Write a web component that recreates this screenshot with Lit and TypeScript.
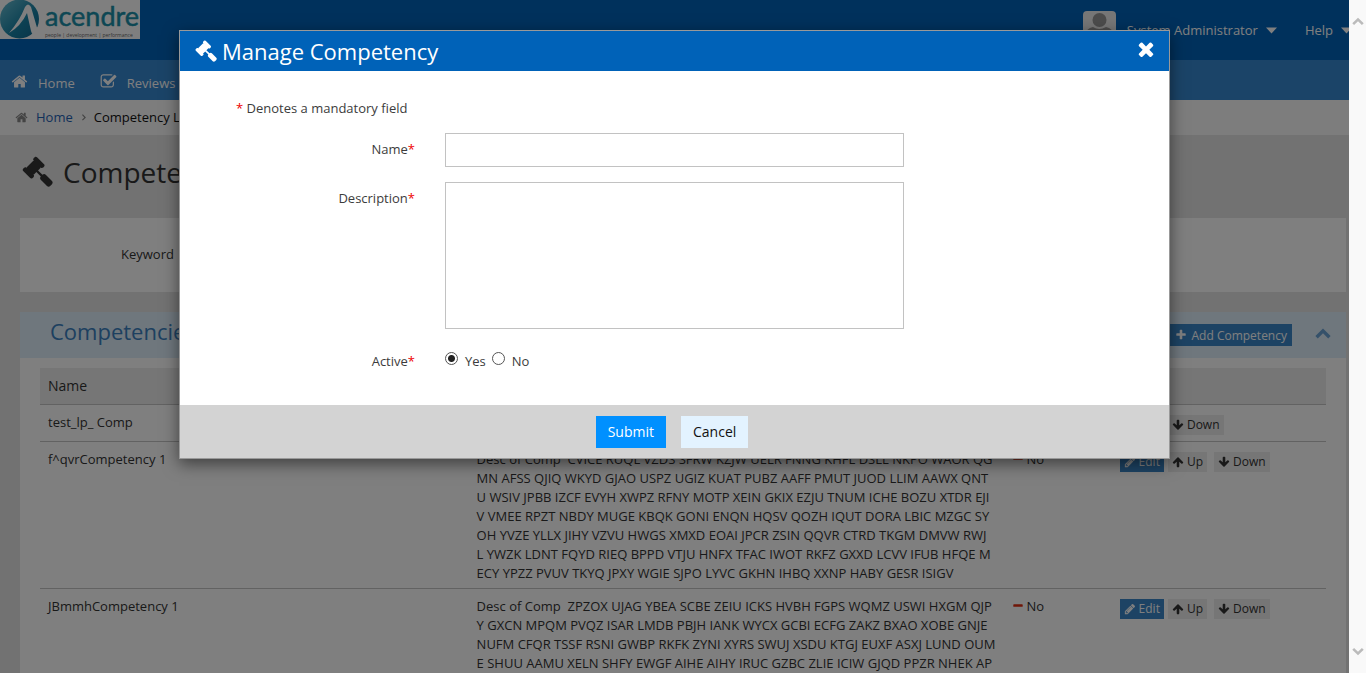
import { LitElement, html, css, svg } from "lit";
import { customElement, property, state } from "lit/decorators.js";

const ICONS: Record<string, string> = {
  home: "M1472 992v480q0 26-19 45t-45 19h-384v-384h-256v384h-384q-26 0-45-19t-19-45v-480q0-1 .5-3t.5-3l575-474 575 474q1 2 1 6zm223-69l-62 74q-8 9-21 11h-3q-13 0-21-7l-692-577-692 577q-12 8-24 7-13-2-21-11l-62-74q-8-10-7-23.5t11-21.5l719-599q32-26 76-26t76 26l244 204v-195q0-14 9-23t23-9h192q14 0 23 9t9 23v408l219 182q10 8 11 21.5t-7 23.5z",
  check: "M1472 930v318q0 119-84.5 203.5t-203.5 84.5h-832q-119 0-203.5-84.5t-84.5-203.5v-832q0-119 84.5-203.5t203.5-84.5h832q63 0 117 25 15 7 18 23 3 17-9 29l-49 49q-10 10-23 10-3 0-9-2-23-6-45-6h-832q-66 0-113 47t-47 113v832q0 66 47 113t113 47h832q66 0 113-47t47-113v-254q0-13 9-22l64-64q10-10 23-10 6 0 12 3 20 8 20 29zm231-489l-814 814q-24 24-57 24t-57-24l-430-430q-24-24-24-57t24-57l110-110q24-24 57-24t57 24l263 263 647-647q24-24 57-24t57 24l110 110q24 24 24 57t-24 57z",
  gavel: "M1771 1536q0 53-37 90l-107 108q-39 37-91 37-53 0-90-37l-363-364q-38-36-38-90 0-53 43-96l-256-256-126 126q-14 14-34 14t-34-14q2 2 12.5 12t12.5 13 10 11.5 10 13.5 6 13.5 5.5 16.5 1.5 18q0 38-28 68-3 3-16.5 18t-19 20.5-18.5 16.5-22 15.5-22 9-26 4.5q-40 0-68-28l-408-408q-28-28-28-68 0-13 4.5-26t9-22 15.5-22 16.5-18.5 20.5-19 18-16.5q30-28 68-28 10 0 18 1.5t16.5 5.5 13.5 6 13.5 10 11.5 10 13 12.5 12 12.5q-14-14-14-34t14-34l348-348q14-14 34-14t34 14q-2-2-12.5-12t-12.5-13-10-11.5-10-13.5-6-13.5-5.5-16.5-1.5-18q0-38 28-68 3-3 16.5-18t19-20.5 18.5-16.5 22-15.5 22-9 26-4.5q40 0 68 28l408 408q28 28 28 68 0 13-4.5 26t-9 22-15.5 22-16.5 18.5-20.5 19-18 16.5q-30 28-68 28-10 0-18-1.5t-16.5-5.5-13.5-6-13.5-10-11.5-10-13-12.5-12-12.5q14 14 14 34t-14 34l-126 126 256 256q43-43 96-43 52 0 91 37l363 363q37 39 37 91z",
  times: "M1490 1322q0 40-28 68l-136 136q-28 28-68 28t-68-28l-294-294-294 294q-28 28-68 28t-68-28l-136-136q-28-28-28-68t28-68l294-294-294-294q-28-28-28-68t28-68l136-136q28-28 68-28t68 28l294 294 294-294q28-28 68-28t68 28l136 136q28 28 28 68t-28 68l-294 294 294 294q28 28 28 68z",
  plus: "M1600 736v192q0 40-28 68t-68 28h-416v416q0 40-28 68t-68 28h-192q-40 0-68-28t-28-68v-416h-416q-40 0-68-28t-28-68v-192q0-40 28-68t68-28h416v-416q0-40 28-68t68-28h192q40 0 68 28t28 68v416h416q40 0 68 28t28 68z",
  minus: "M1600 736v192q0 40-28 68t-68 28h-1216q-40 0-68-28t-28-68v-192q0-40 28-68t68-28h1216q40 0 68 28t28 68z",
  pencil: "M491 1536l91-91-235-235-91 91v107h128v128h107zm523-928q0-22-22-22-10 0-17 7l-542 542q-7 7-7 17 0 22 22 22 10 0 17-7l542-542q7-7 7-17zm-54-192l416 416-832 832h-416v-416zm683 96q0 53-37 90l-166 166-416-416 166-165q36-38 90-38 53 0 91 38l235 234q37 39 37 91z",
  up: "M1675 971q0 51-37 90l-75 75q-38 38-91 38-54 0-90-38l-294-293v704q0 52-37.5 84.5t-90.5 32.5h-128q-53 0-90.5-32.5t-37.5-84.5v-704l-294 293q-36 38-90 38t-90-38l-75-75q-38-38-38-90 0-53 38-91l651-651q35-37 90-37 54 0 91 37l651 651q37 39 37 91z",
  collapse: "M896 400L1750 1240 1480 1500 896 930 312 1500 42 1240z",
  caret: "M0 420H1792L896 1400z",
  next: "M600 420L760 260 1380 880 760 1500 600 1340 1060 880z",
};

@customElement("app-icon")
export class AppIcon extends LitElement {
  @property() name = "home";
  static styles = css`
    :host { display: inline-block; width: 14px; height: 14px; flex: none; }
    svg { display: block; width: 100%; height: 100%; fill: currentColor; }
    .flip { transform: rotate(180deg); }
  `;
  render() {
    const flipped = this.name === "down";
    return html`<svg class=${flipped ? "flip" : ""} viewBox="0 0 1792 1792" aria-hidden="true">
      ${svg`<path d=${ICONS[flipped ? "up" : this.name]}></path>`}
    </svg>`;
  }
}

@customElement("app-logo")
export class AppLogo extends LitElement {
  static styles = css`
    :host { display: flex; width: 140px; height: 39px; background: #fff; }
    .mark { width: 40px; height: 39px; flex: none; }
    .words { display: flex; flex-direction: column; padding-left: 5px; }
    .name { font: 27px/32px Lato, "Open Sans", sans-serif; color: #1b8fa8; -webkit-text-stroke: 0.5px #1b8fa8; }
    .tag { font: 5px/6px "Open Sans", sans-serif; color: #666; white-space: nowrap; }
  `;
  render() {
    return html`
      <svg class="mark" viewBox="0 0 40 39" aria-hidden="true">
        <defs>
          <linearGradient id="g" x1="0" y1="0" x2="1" y2="1">
            <stop offset="0" stop-color="#6cc0d4"></stop>
            <stop offset="0.6" stop-color="#1782a6"></stop>
            <stop offset="1" stop-color="#12668f"></stop>
          </linearGradient>
        </defs>
        <circle cx="19.500" cy="19" r="19.500" fill="url(#g)"></circle>
        <path d="M9 33Q20 20 25 7Q28 2 31 7L38 31Q38 35 35 35Q32 35 31 31L27 13Q21 26 9 33z" fill="#fff"></path>
      </svg>
      <span class="words">
        <span class="name">acendre</span>
        <span class="tag">people | development | performance</span>
      </span>
    `;
  }
}

interface Competency {
  name: string;
  description: string[];
  active: string;
}

const ROWS: Competency[] = [
  { name: "test_lp_ Comp", description: ["test_lp_ Comp"], active: "Yes" },
  {
    name: "f^qvrCompetency 1",
    description: [
      "Desc of Comp\u00a0 CVICE RUQL VZDS SFRW KZJW UELR FNNG KHFL DSLL NKPO WAOR QG",
      "MN AFSS QJIQ WKYD GJAO USPZ UGIZ KUAT PUBZ AAFF PMUT JUOD LLIM AAWX QNT",
      "U WSIV JPBB IZCF EVYH XWPZ RFNY MOTP XEIN GKIX EZJU TNUM ICHE BOZU XTDR EJI",
      "V VMEE RPZT NBDY MUGE KBQK GONI ENQN HQSV QOZH IQUT DORA LBIC MZGC SY",
      "OH YVZE YLLX JIHY VZVU HWGS XMXD EOAI JPCR ZSIN QQVR CTRD TKGM DMVW RWJ",
      "L YWZK LDNT FQYD RIEQ BPPD VTJU HNFX TFAC IWOT RKFZ GXXD LCVV IFUB HFQE M",
      "ECY YPZZ PVUV TKYQ JPXY WGIE SJPO LYVC GKHN IHBQ XXNP HABY GESR ISIGV",
    ],
    active: "No",
  },
  {
    name: "JBmmhCompetency 1",
    description: [
      "Desc of Comp\u00a0 ZPZOX UJAG YBEA SCBE ZEIU ICKS HVBH FGPS WQMZ USWI HXGM QJP",
      "Y GXCN MPQM PVQZ ISAR LMDB PBJH IANK WYCX GCBI ECFG ZAKZ BXAO XOBE GNJE",
      "NUFM CFQR TSSF RSNI GWBP RKFK ZYNI XYRS SWUJ XSDU KTGJ EUXF ASXJ LUND OUM",
      "E SHUU AAMU XELN SHFY EWGF AIHE AIHY IRUC GZBC ZLIE ICIW GJQD PPZR NHEK AP",
    ],
    active: "No",
  },
];

@customElement("competency-page")
export class CompetencyPage extends LitElement {
  static styles = css`
    :host { display: block; color: #333; background: #e4e4e4; }
    * { box-sizing: border-box; }
    a { text-decoration: none; color: inherit; }
    .top { display: flex; justify-content: space-between; height: 60px; background: #0062b8; color: #fff; }
    .user { display: flex; align-items: center; }
    .avatar { width: 33px; height: 38px; margin-right: 11px; }
    .menu { display: flex; align-items: center; gap: 8px; }
    .menu app-icon { width: 11px; height: 11px; }
    .help { margin: 0 -3px 0 28px; }
    .nav { display: flex; gap: 25px; height: 40px; padding: 6px 11px 0; background: #3788d0; color: #fff; align-items: center; }
    .nav a { display: flex; align-items: center; gap: 10px; }
    .nav app-icon { width: 17px; height: 17px; margin-bottom: 3px; }
    .crumbs { display: flex; align-items: center; height: 35px; padding: 0 15px; gap: 8px; background: #fafafa; }
    .crumbs a { color: #1f62b5; }
    .crumbs app-icon { width: 13px; height: 13px; color: #888; }
    .crumbs .sep { width: 9px; height: 9px; margin: 0 -2px; }
    .crumbs .here { color: #111; }
    .title { display: flex; align-items: center; gap: 10px; height: 83px; margin: 0; padding: 0 22px 10px; font: 28px/38px "Open Sans", sans-serif; }
    .title app-icon { width: 31px; height: 31px; }
    .panel { margin: 0 3px 20px 20px; background: #fff; }
    .search { display: flex; align-items: center; gap: 20px; padding: 19px 101px 21px; }
    .search input { width: 460px; height: 34px; border: 1px solid #bbb; font: inherit; }
    .head { display: flex; align-items: center; height: 46px; padding: 0 15px 0 30px; background: #dfeefa; }
    .head h2 { flex: 1; margin: 0; padding-bottom: 8px; font: 22px/30px "Open Sans", sans-serif; color: #3a80c0; }
    .add { display: flex; align-items: center; gap: 5px; height: 22px; margin-right: 23px; padding: 0 5px 0 8px; border: 0; background: #3b87c9; color: #fff; font: inherit; font-size: 12px; }
    .add app-icon { width: 12px; height: 12px; }
    .fold { display: flex; padding: 0 0 4px; border: 0; background: none; color: #6aa3d4; }
    .fold app-icon { width: 16px; height: 16px; }
    .body { padding: 10px 20px; }
    table { width: 100%; table-layout: fixed; border-collapse: collapse; }
    th, td { border-bottom: 1px solid #c4c4c4; text-align: left; vertical-align: top; font-weight: 400; }
    th { padding: 8px; height: 36px; font-size: 14px; background: #ededed; }
    td { padding: 8px 8px 5px; }
    .c-name { width: 33.33%; }
    .c-desc { width: 41.67%; }
    .c-active { width: 8.33%; }
    .desc { white-space: nowrap; }
    .flag { display: flex; align-items: center; gap: 2px; }
    .flag app-icon { width: 12px; height: 12px; color: #e02c10; }
    .acts { display: flex; gap: 7px; padding: 2px 0 1px; }
    .act { display: flex; align-items: center; gap: 3px; height: 20px; padding: 0 4px; border: 0; background: #ececec; color: #333; font: inherit; font-size: 12px; }
    .act app-icon { width: 12px; height: 12px; }
    .edit { margin-right: -3px; background: #3b87c9; color: #fff; }
  `;
  render() {
    return html`
      <header class="top">
        <app-logo></app-logo>
        <div class="user">
          <svg class="avatar" viewBox="0 0 33 38" aria-hidden="true">
            <rect width="33" height="38" rx="4" fill="#eee"></rect>
            <circle cx="16.500" cy="9" r="7" fill="#999"></circle>
            <path d="M3 38V24q0-7 7-8q6 4 13 0q7 1 7 8v14z" fill="#999"></path>
          </svg>
          <a class="menu" href="#user">System Administrator <app-icon name="caret"></app-icon></a>
          <a class="menu help" href="#help">Help <app-icon name="caret"></app-icon></a>
        </div>
      </header>
      <nav class="nav">
        <a href="#home"><app-icon name="home"></app-icon>Home</a>
        <a href="#reviews"><app-icon name="check"></app-icon>Reviews</a>
      </nav>
      <nav class="crumbs" aria-label="Breadcrumb">
        <app-icon name="home"></app-icon>
        <a href="#home">Home</a>
        <app-icon class="sep" name="next"></app-icon>
        <span class="here">Competency List</span>
      </nav>
      <h1 class="title"><app-icon name="gavel"></app-icon>Competency List</h1>
      <section class="panel search">
        <label for="keyword">Keyword</label>
        <input id="keyword" type="text" />
      </section>
      <section class="panel">
        <div class="head">
          <h2>Competencies</h2>
          <button class="add" type="button"><app-icon name="plus"></app-icon>Add Competency</button>
          <button class="fold" type="button" aria-label="Collapse"><app-icon name="collapse"></app-icon></button>
        </div>
        <div class="body">
          <table>
            <thead>
              <tr>
                <th class="c-name">Name</th>
                <th class="c-desc">Description</th>
                <th class="c-active">Active</th>
                <th></th>
              </tr>
            </thead>
            <tbody>
              ${ROWS.map(
                (row, index) => html`<tr>
                  <td>${row.name}</td>
                  <td class="desc">${row.description.map((line) => html`<div>${line}</div>`)}</td>
                  <td><span class="flag"><app-icon name="minus"></app-icon>${row.active}</span></td>
                  <td>
                    <div class="acts">
                      <button class="act edit" type="button"><app-icon name="pencil"></app-icon>Edit</button>
                      ${index > 0
                        ? html`<button class="act" type="button"><app-icon name="up"></app-icon>Up</button>`
                        : ""}
                      <button class="act" type="button"><app-icon name="down"></app-icon>Down</button>
                    </div>
                  </td>
                </tr>`
              )}
            </tbody>
          </table>
        </div>
      </section>
    `;
  }
}

@customElement("competency-dialog")
export class CompetencyDialog extends LitElement {
  @state() private active = "yes";
  static styles = css`
    :host { display: block; width: 991px; max-width: 100%; margin: 30px auto; border: 1px solid #999; box-shadow: 0 5px 15px rgba(0, 0, 0, 0.5); background: #fff; color: #3c3c3c; box-sizing: border-box; }
    * { box-sizing: border-box; }
    .head { display: flex; align-items: center; height: 40px; padding: 0 15px; background: #0062b8; color: #fff; }
    .head h2 { flex: 1; display: flex; align-items: center; gap: 5px; margin: 0; font: 22px/30px "Open Sans", sans-serif; }
    .head app-icon { width: 22px; height: 22px; }
    .head .close app-icon { width: 22px; height: 22px; }
    .close { display: flex; margin-right: -3px; padding: 0 0 4px; border: 0; background: none; color: #fff; }
    .form { display: grid; grid-template-columns: 265fr 459fr 265fr; row-gap: 15px; padding: 28px 0 34px; }
    .note { grid-column: 1 / -1; padding-left: 56px; }
    .req { color: #e00; }
    .label { grid-column: 1; padding: 7px 30px 0 0; text-align: right; }
    .text { width: 100%; margin: 0; padding: 6px 12px; border: 1px solid #c2c2c2; border-radius: 0; background: #fff; font: inherit; resize: none; }
    input.text { height: 34px; }
    textarea.text { display: block; height: 147px; }
    #active { padding-top: 8px; }
    .radios { display: flex; gap: 6px; padding-top: 8px; }
    .radios label { display: flex; align-items: flex-start; gap: 7px; }
    .radio { appearance: none; width: 13px; height: 13px; margin: 0; border: 1px solid #555; border-radius: 50%; background: #fff; }
    .radio:checked { background: radial-gradient(circle, #222 0 3px, #fff 4px); }
    .foot { display: flex; justify-content: center; gap: 15px; padding: 11px 5px 10px 0; background: #d3d3d3; }
    .btn { height: 32px; padding: 0 12px; border: 0; font: 14px/20px "Open Sans", sans-serif; }
    .submit { background: #0090ff; color: #fff; }
    .cancel { background: #e3f3ff; color: #111; }
  `;
  private pick(value: string) {
    this.active = value;
  }
  render() {
    return html`
      <div class="head">
        <h2><app-icon name="gavel"></app-icon>Manage Competency</h2>
        <button class="close" type="button" aria-label="Close"><app-icon name="times"></app-icon></button>
      </div>
      <div class="form">
        <div class="note"><span class="req">*</span> Denotes a mandatory field</div>
        <label class="label" for="name">Name<span class="req">*</span></label>
        <input class="text" id="name" type="text" />
        <label class="label" for="description">Description<span class="req">*</span></label>
        <textarea class="text" id="description"></textarea>
        <span class="label" id="active">Active<span class="req">*</span></span>
        <div class="radios" role="radiogroup" aria-labelledby="active">
          <label><input class="radio" type="radio" name="active" .checked=${this.active === "yes"} @change=${() => this.pick("yes")} />Yes</label>
          <label><input class="radio" type="radio" name="active" .checked=${this.active === "no"} @change=${() => this.pick("no")} />No</label>
        </div>
      </div>
      <div class="foot">
        <button class="btn submit" type="button">Submit</button>
        <button class="btn cancel" type="button">Cancel</button>
      </div>
    `;
  }
}

@customElement("app-root")
export class AppRoot extends LitElement {
  static styles = css`
    :host { display: flex; height: 100vh; overflow: hidden; font: 13px/19px "Open Sans", sans-serif; }
    .view { position: relative; flex: 1; min-width: 0; overflow: hidden; }
    .shade { position: absolute; inset: 0; overflow: hidden; background: rgba(0, 0, 0, 0.5); }
    .track { display: flex; flex-direction: column; justify-content: space-between; align-items: center; width: 17px; padding: 15px 0; background: #f9f9f9; color: #bbb; box-sizing: border-box; }
    .arrow { width: 12px; height: 12px; }
    .arrow.down { transform: rotate(180deg); }
  `;
  render() {
    return html`
      <div class="view">
        <competency-page></competency-page>
        <div class="shade">
          <competency-dialog role="dialog" aria-label="Manage Competency"></competency-dialog>
        </div>
      </div>
      <div class="track">
        <app-icon class="arrow" name="collapse"></app-icon>
        <app-icon class="arrow down" name="collapse"></app-icon>
      </div>
    `;
  }
}
